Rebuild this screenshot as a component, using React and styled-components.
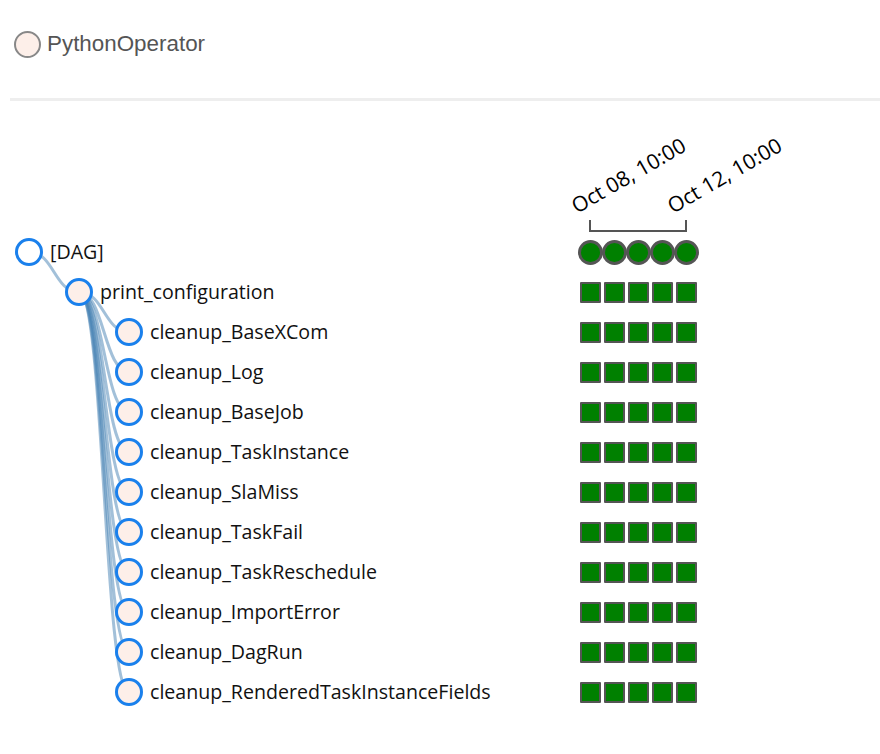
import styled, { createGlobalStyle } from 'styled-components';

const GlobalStyle = createGlobalStyle`
    html, body {
        margin: 0;
        padding: 0;
        background: #fff;
    }
    body {
        font-family: "Open Sans", "Noto Sans CJK KR", sans-serif;
        color: #000;
    }
`;

const ROW_H = 40;
const HEADER_H = 131;
const INDENT = 50;
const NODE_LEFT = 15;
const NODE_SIZE = 28;
const STATUS_LEFT = 578;
const SLOT = 24;

const Legend = styled.div`
    display: flex;
    align-items: center;
    gap: 6px;
    padding: 30px 0 0 14px;
    height: 28px;
`;

const LegendDot = styled.span`
    box-sizing: border-box;
    width: 27px;
    height: 27px;
    border-radius: 50%;
    border: 2px solid #888;
    background: #fdefe9;
`;

const LegendText = styled.span`
    font-family: "Liberation Sans", Arial, sans-serif;
    font-size: 22.4px;
    color: #555;
`;

const Rule = styled.div`
    margin: 40px 0 0 10px;
    height: 3px;
    background: #eee;
`;

const TreeArea = styled.div`
    position: relative;
`;

const LinkLayer = styled.svg`
    position: absolute;
    top: 0;
    left: 0;
    width: 100%;
    height: 100%;
    overflow: visible;
    pointer-events: none;
    z-index: 0;
`;

const Header = styled.div`
    height: ${HEADER_H}px;
    padding-left: ${STATUS_LEFT}px;
`;

const Axis = styled.svg`
    display: block;
    overflow: visible;
`;

const Row = styled.div`
    position: relative;
    z-index: 1;
    display: flex;
    align-items: center;
    height: ${ROW_H}px;
`;

const NodeCell = styled.div`
    flex: 0 0 ${STATUS_LEFT}px;
    box-sizing: border-box;
    display: flex;
    align-items: center;
    gap: 7px;
    padding-left: ${(p) => NODE_LEFT + p.$depth * INDENT}px;
`;

const NodeCircle = styled.span`
    box-sizing: border-box;
    flex: 0 0 ${NODE_SIZE}px;
    height: ${NODE_SIZE}px;
    border-radius: 50%;
    border: 3px solid #1a80ec;
    background: ${(p) => (p.$dag ? '#fff' : '#fdefe9')};
`;

const Label = styled.span`
    font-size: 19.6px;
    line-height: 1;
    color: #111;
    white-space: nowrap;
`;

const StatusCells = styled.div`
    display: flex;
`;

const Slot = styled.div`
    width: ${SLOT}px;
    height: ${ROW_H}px;
    display: flex;
    align-items: center;
    justify-content: center;
`;

const RunDot = styled.span`
    box-sizing: border-box;
    flex: 0 0 25px;
    height: 25px;
    border-radius: 50%;
    border: 3.5px solid #555;
    background: #008000;
`;

const TaskBox = styled.span`
    box-sizing: border-box;
    width: 21px;
    height: 21px;
    border: 2px solid #555;
    border-radius: 1px;
    background: #008000;
`;

const tasks = [
    { name: '[DAG]', depth: 0, dag: true },
    { name: 'print_configuration', depth: 1 },
    { name: 'cleanup_BaseXCom', depth: 2 },
    { name: 'cleanup_Log', depth: 2 },
    { name: 'cleanup_BaseJob', depth: 2 },
    { name: 'cleanup_TaskInstance', depth: 2 },
    { name: 'cleanup_SlaMiss', depth: 2 },
    { name: 'cleanup_TaskFail', depth: 2 },
    { name: 'cleanup_TaskReschedule', depth: 2 },
    { name: 'cleanup_ImportError', depth: 2 },
    { name: 'cleanup_DagRun', depth: 2 },
    { name: 'cleanup_RenderedTaskInstanceFields', depth: 2 },
];

const runs = ['Oct 08, 10:00', '', '', '', 'Oct 12, 10:00'];

function nodePos(i) {
    const t = tasks[i];
    return {
        x: NODE_LEFT + t.depth * INDENT + NODE_SIZE / 2,
        y: HEADER_H + i * ROW_H + ROW_H / 2,
    };
}

function linkPath(a, b) {
    const m = (a.x + b.x) / 2;
    return `M${a.x},${a.y}C${m},${a.y} ${m},${b.y} ${b.x},${b.y}`;
}

function Links() {
    const paths = [];
    // every task hangs off the closest row above it with a smaller depth
    tasks.forEach((t, i) => {
        if (i === 0) return;
        let p = i - 1;
        while (tasks[p].depth >= t.depth) p--;
        paths.push(linkPath(nodePos(p), nodePos(i)));
    });
    return (
        <LinkLayer>
            {paths.map((d, i) => (
                <path key={i} d={d} fill="none" stroke="#4682b4" strokeOpacity="0.5" strokeWidth="3" />
            ))}
        </LinkLayer>
    );
}

function DateAxis() {
    const first = SLOT / 2;
    const last = SLOT * (runs.length - 1) + SLOT / 2;
    return (
        <Axis width={SLOT * runs.length} height={HEADER_H}>
            {runs.map((label, i) => {
                if (!label) return null;
                const x = SLOT * i + SLOT / 2 - 13;
                return (
                    <text
                        key={i}
                        x={x}
                        y={113}
                        transform={`rotate(-30 ${x} 113)`}
                        fontFamily='"Open Sans", sans-serif'
                        fontSize="21"
                        fill="#000"
                    >
                        {label}
                    </text>
                );
            })}
            <path
                d={`M${first},119V130H${last}V119`}
                fill="none"
                stroke="#555"
                strokeWidth="2"
            />
        </Axis>
    );
}

export default function App() {
    return (
        <>
            <GlobalStyle />
            <Legend>
                <LegendDot />
                <LegendText>PythonOperator</LegendText>
            </Legend>
            <Rule />
            <TreeArea>
                <Links />
                <Header>
                    <DateAxis />
                </Header>
                {tasks.map((t) => (
                    <Row key={t.name}>
                        <NodeCell $depth={t.depth}>
                            <NodeCircle $dag={t.dag} />
                            <Label>{t.name}</Label>
                        </NodeCell>
                        <StatusCells>
                            {runs.map((_, j) => (
                                <Slot key={j}>{t.dag ? <RunDot /> : <TaskBox />}</Slot>
                            ))}
                        </StatusCells>
                    </Row>
                ))}
            </TreeArea>
        </>
    );
}
